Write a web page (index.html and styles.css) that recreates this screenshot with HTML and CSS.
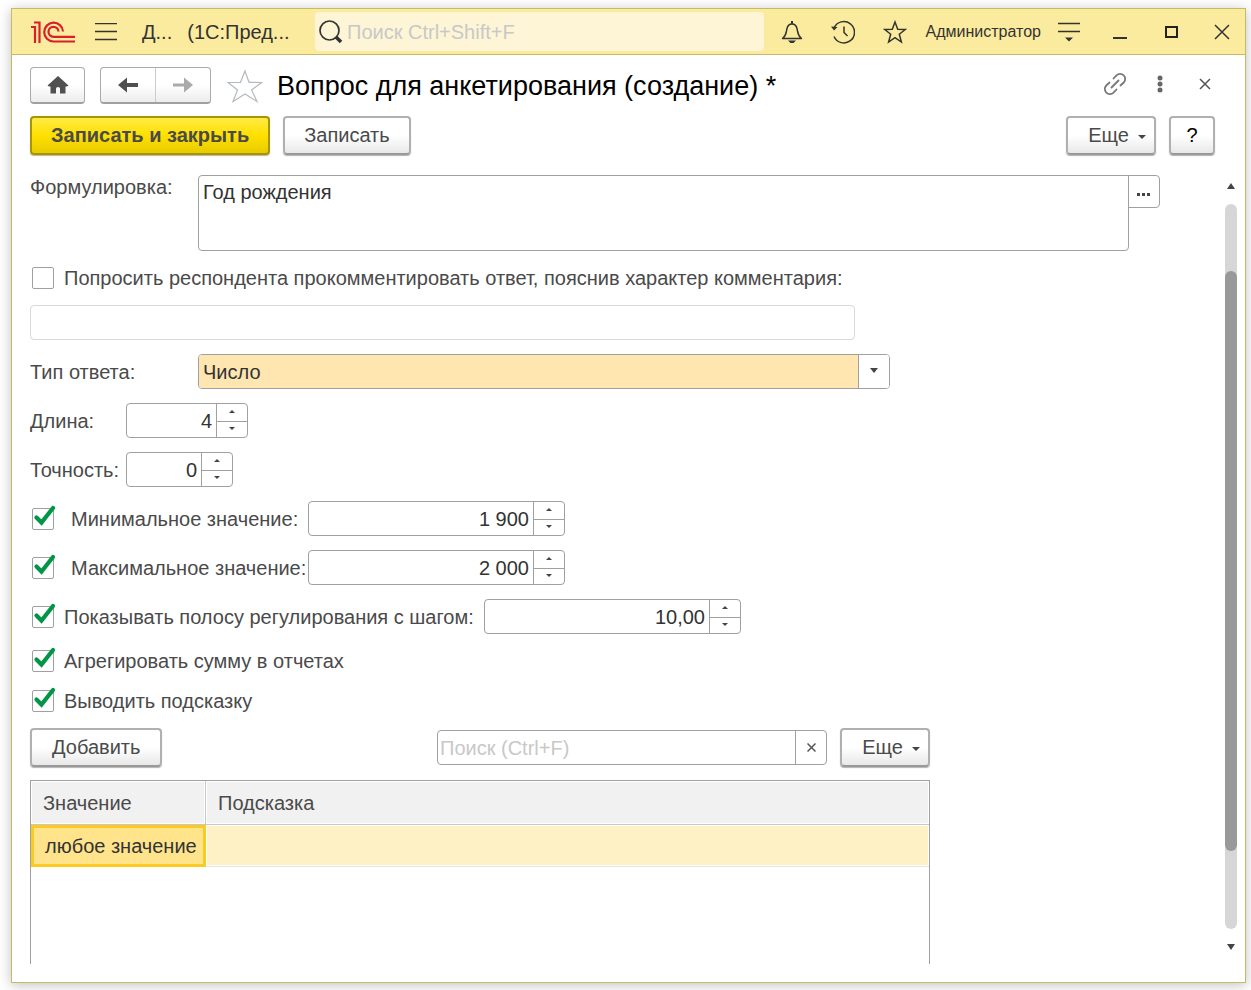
FILE: index.html
```html
<!DOCTYPE html>
<html lang="ru">
<head>
<meta charset="utf-8">
<title>Вопрос для анкетирования (создание)</title>
<link rel="stylesheet" href="styles.css">
</head>
<body>
<svg class="sprite" aria-hidden="true">
  <symbol id="tick" viewBox="0 0 26 26"><path d="M5.500 13.500 10.500 18.500 22 4" fill="none" stroke="#009646" stroke-width="4.200" stroke-linecap="round"/></symbol>
  <symbol id="up" viewBox="0 0 6 4" preserveAspectRatio="none"><path d="M0 4 3 0 6 4z" fill="#444"/></symbol>
  <symbol id="down" viewBox="0 0 6 4" preserveAspectRatio="none"><path d="M0 0H6L3 4z" fill="#444"/></symbol>
</svg>
<div class="window">
  <header class="titlebar">
    <svg class="logo" width="44" height="22" viewBox="0 0 44 22" role="img" aria-label="1С"><g fill="none" stroke="#d9202a" stroke-width="2.200"><path d="M0 6H4V22M3 1.500H8.500V22M32 10.500A9.400 9.400 0 1 0 22.500 20.500H44M27.500 10.500A5 5 0 1 0 22.500 15.800H44"/></g></svg>
    <button class="icon menu" aria-label="Главное меню"><svg width="22" height="18" viewBox="0 0 22 18"><path d="M0 .5H22M0 8.500H22M0 16.500H22" stroke="#333" stroke-width="1.500"/></svg></button>
    <div class="app"><span>Д...</span><span>(1С:Пред...</span></div>
    <label class="search">
      <svg width="24" height="24" viewBox="0 0 24 24"><circle cx="10.500" cy="10.500" r="9.500" fill="none" stroke="#333" stroke-width="1.700"/><path d="m17 17 5 5" stroke="#333" stroke-width="3.500"/></svg>
      <input type="text" placeholder="Поиск Ctrl+Shift+F" aria-label="Поиск">
    </label>
    <nav class="tools">
      <button class="icon" aria-label="Оповещения"><svg width="22" height="24" viewBox="0 0 22 24"><path d="M1.500 18.500H20.500C16.500 15.500 17 12.500 16 8.500 15.300 5.500 13.500 4 11 4S6.700 5.500 6 8.500C5 12.500 5.500 15.500 1.500 18.500z" fill="none" stroke="#333" stroke-width="1.500" stroke-linejoin="round"/><path d="M11 1V4" stroke="#333" stroke-width="2"/><path d="M7 20.500H15L12.500 23H9.500z" fill="#333"/></svg></button>
      <button class="icon" aria-label="История"><svg width="24" height="24" viewBox="0 0 24 24"><path d="M3 8A10.700 10.700 0 1 1 3 16.500M13 6.500V12.500L16.500 16" fill="none" stroke="#333" stroke-width="1.500"/><path d="M0 6.500 6.500 7 3 10.500z" fill="#333"/></svg></button>
      <button class="icon" aria-label="Избранное"><svg width="24" height="24" viewBox="0 0 24 24"><path d="m12 2 2.700 7.200 7.600.3-6 4.700 2.100 7.900-6.400-4.400-6.400 4.400 2.100-7.900-6-4.700 7.600-.3z" fill="none" stroke="#333" stroke-width="1.500"/></svg></button>
      <a class="user" href="#user">Администратор</a>
      <button class="icon" aria-label="Настройки"><svg width="22" height="20" viewBox="0 0 22 20"><path d="M0 1.500H22M0 9.500H22" stroke="#333" stroke-width="1.500"/><path d="M7 15.500H15L11 19.500z" fill="#333"/></svg></button>
    </nav>
    <div class="winctl">
      <button class="icon" aria-label="Свернуть"><svg width="16" height="16" viewBox="0 0 16 16"><path d="M1 14H15" stroke="#333" stroke-width="2"/></svg></button>
      <button class="icon" aria-label="Развернуть"><svg width="16" height="16" viewBox="0 0 16 16"><path d="M3 3H14V13H3z" fill="none" stroke="#222" stroke-width="2"/></svg></button>
      <button class="icon" aria-label="Закрыть"><svg width="16" height="16" viewBox="0 0 16 16"><path d="m1 1 14 14M15 1 1 15" stroke="#333" stroke-width="1.500"/></svg></button>
    </div>
  </header>

  <section class="heading">
    <button class="navbtn home" aria-label="Начальная страница"><svg width="22" height="18" viewBox="0 0 22 18"><path d="M11 0 21.500 9.500 20 10.500H18.500V17.500H13V12.500Q13 11 11 11T9 12.500V17.500H3.500V10.500H2L.5 9.500z" fill="#505050"/></svg></button>
    <div class="navpair">
      <button aria-label="Назад"><svg width="22" height="16" viewBox="0 0 22 16"><path d="M1 8 10 .5V6H21V10H10V15.500z" fill="#505050"/></svg></button>
      <button aria-label="Вперед" disabled><svg width="22" height="16" viewBox="0 0 22 16"><path d="M21 8 12 .5V6.500H1V9.500H12V15.500z" fill="#aaa"/></svg></button>
    </div>
    <button class="icon fav" aria-label="Добавить в избранное"><svg width="36" height="34" viewBox="0 0 36 34"><path d="m18 2 4 11.300 12.500.2-10 7.500 5.500 11.500-12-7.500-12 7.500 4.500-11.500-9.500-7.500 12.500-.2z" fill="#fff" stroke="#b4bac0" stroke-width="1.200"/></svg></button>
    <h1>Вопрос для анкетирования (создание) *</h1>
    <div class="formctl">
      <button class="icon" aria-label="Получить ссылку"><svg width="24" height="24" viewBox="0 0 24 24"><g fill="none" stroke="#777" stroke-width="1.800" stroke-linecap="round"><path d="m8.500 15.500 7-7M10.500 6.500l3-3.200a5 5 0 0 1 7.200 7.200l-3.200 3M6.500 10.500l-3.200 3a5 5 0 0 0 7.200 7.200l3-3.200"/></g></svg></button>
      <button class="icon" aria-label="Действия"><svg width="6" height="18" viewBox="0 0 6 18"><g fill="#666"><circle cx="3" cy="3" r="2.500"/><circle cx="3" cy="9" r="2.500"/><circle cx="3" cy="15" r="2.500"/></g></svg></button>
      <button class="icon" aria-label="Закрыть форму"><svg width="12" height="12" viewBox="0 0 12 12"><path d="m1 1 10 10M11 1 1 11" stroke="#555" stroke-width="1.500"/></svg></button>
    </div>
  </section>

  <section class="commands">
    <button class="btn primary">Записать и закрыть</button>
    <button class="btn">Записать</button>
    <span class="grow"></span>
    <button class="btn more">Еще<svg width="8" height="4"><use href="#down"/></svg></button>
    <button class="btn help">?</button>
  </section>

  <main class="content">
    <form class="form">
      <div class="row top">
        <label class="cap wide" for="wording">Формулировка:</label>
        <div class="wording">
          <textarea id="wording">Год рождения</textarea>
          <button type="button" aria-label="Выбрать"><svg width="14" height="3" viewBox="0 0 14 3"><path d="M0 0H3V3H0zM5 0H8V3H5zM10 0H13V3H10z" fill="#444"/></svg></button>
        </div>
      </div>
      <div class="row comment">
        <label class="check"><span class="box"><input type="checkbox"><svg><use href="#tick"/></svg></span>Попросить респондента прокомментировать ответ, пояснив характер комментария:</label>
      </div>
      <input class="field note" type="text" aria-label="Комментарий" disabled>
      <div class="row">
        <label class="cap wide" for="kind">Тип ответа:</label>
        <div class="field select">
          <select id="kind"><option>Число</option></select>
          <span class="drop"><svg width="8" height="5"><use href="#down"/></svg></span>
        </div>
      </div>
      <div class="row">
        <label class="cap" for="len">Длина:</label>
        <div class="field spin w-len"><input id="len" type="text" value="4"><div class="steps"><button type="button" aria-label="Больше"><svg><use href="#up"/></svg></button><button type="button" aria-label="Меньше"><svg><use href="#down"/></svg></button></div></div>
      </div>
      <div class="row">
        <label class="cap" for="prec">Точность:</label>
        <div class="field spin w-prec"><input id="prec" type="text" value="0"><div class="steps"><button type="button" aria-label="Больше"><svg><use href="#up"/></svg></button><button type="button" aria-label="Меньше"><svg><use href="#down"/></svg></button></div></div>
      </div>
      <div class="row">
        <label class="check limit"><span class="box"><input type="checkbox" checked><svg><use href="#tick"/></svg></span>Минимальное значение:</label>
        <div class="field spin"><input type="text" value="1 900" aria-label="Минимальное значение"><div class="steps"><button type="button" aria-label="Больше"><svg><use href="#up"/></svg></button><button type="button" aria-label="Меньше"><svg><use href="#down"/></svg></button></div></div>
      </div>
      <div class="row">
        <label class="check limit"><span class="box"><input type="checkbox" checked><svg><use href="#tick"/></svg></span>Максимальное значение:</label>
        <div class="field spin"><input type="text" value="2 000" aria-label="Максимальное значение"><div class="steps"><button type="button" aria-label="Больше"><svg><use href="#up"/></svg></button><button type="button" aria-label="Меньше"><svg><use href="#down"/></svg></button></div></div>
      </div>
      <div class="row">
        <label class="check step"><span class="box"><input type="checkbox" checked><svg><use href="#tick"/></svg></span>Показывать полосу регулирования с шагом:</label>
        <div class="field spin"><input type="text" value="10,00" aria-label="Шаг"><div class="steps"><button type="button" aria-label="Больше"><svg><use href="#up"/></svg></button><button type="button" aria-label="Меньше"><svg><use href="#down"/></svg></button></div></div>
      </div>
      <div class="flags">
        <label class="check"><span class="box"><input type="checkbox" checked><svg><use href="#tick"/></svg></span>Агрегировать сумму в отчетах</label>
        <label class="check"><span class="box"><input type="checkbox" checked><svg><use href="#tick"/></svg></span>Выводить подсказку</label>
      </div>
      <div class="listbar">
        <button type="button" class="btn">Добавить</button>
        <span class="grow"></span>
        <div class="field find"><input type="text" placeholder="Поиск (Ctrl+F)" aria-label="Поиск в списке"><button type="button" aria-label="Очистить"><svg width="9" height="9" viewBox="0 0 9 9"><path d="m.5.5 8 8M8.500.5l-8 8" stroke="#555" stroke-width="1.500"/></svg></button></div>
        <button type="button" class="btn more">Еще<svg width="8" height="4"><use href="#down"/></svg></button>
      </div>
      <div class="list">
        <table>
          <thead><tr><th class="c1">Значение</th><th>Подсказка</th></tr></thead>
          <tbody><tr><td class="current">любое значение</td><td></td></tr></tbody>
        </table>
      </div>
    </form>
    <div class="scroll">
      <svg width="8" height="6"><use href="#up"/></svg>
      <div class="track"><div class="thumb"></div></div>
      <svg width="8" height="6"><use href="#down"/></svg>
    </div>
  </main>
</div>
</body>
</html>
```

FILE: styles.css
```css
* { box-sizing: border-box; }
body {
  margin: 0;
  min-height: 100vh;
  padding: 8px 5px 7px 11px;
  display: flex;
  background: #fff;
  font: 20px/24px "Liberation Sans", Arial, sans-serif;
  color: #4a4a4a;
}
button, input, select, textarea { font: inherit; color: inherit; margin: 0; padding: 0; border: 0; background: none; outline: 0; }
button { display: flex; align-items: center; justify-content: center; }
svg { display: block; flex: none; }
.sprite { position: absolute; width: 0; height: 0; }
.grow { flex: 1; }

.window {
  flex: 1;
  min-width: 0;
  display: flex;
  flex-direction: column;
  border: 1px solid #c8b964;
  background: #fff;
  box-shadow: 0 2px 12px rgba(0, 0, 0, .25);
}

/* Title bar */
.titlebar {
  display: flex;
  align-items: center;
  height: 46px;
  padding: 0 15px 0 19px;
  background: #fbeb9e;
  border-bottom: 1px solid #c8b964;
  color: #333;
}
.menu { margin-left: 20px; }
.app { display: flex; gap: 15px; margin-left: 25px; width: 173px; white-space: nowrap; }
.search {
  flex: 1;
  display: flex;
  align-items: center;
  gap: 4px;
  height: 39px;
  padding-left: 4px;
  border-radius: 4px;
  background: #fdf5d5;
}
.search input { flex: 1; min-width: 0; }
::placeholder { color: #c8c8c8; opacity: 1; }
.tools { display: flex; align-items: center; gap: 28px; margin-left: 17px; }
.user { margin: 0 -11px 0 -9px; font-size: 16px; color: inherit; text-decoration: none; }
.winctl { display: flex; gap: 35px; margin-left: 32px; }

/* Form heading */
.heading { display: flex; align-items: center; height: 37px; margin: 12px 34px 0 18px; }
.navbtn, .navpair {
  height: 37px;
  border: 1px solid #aaa;
  border-bottom: 2px solid #a0a0a0;
  border-radius: 4px;
  background: linear-gradient(#fff 50%, #ececec);
}
.navbtn { width: 55px; }
.navpair { display: flex; width: 111px; margin-left: 15px; }
.navpair button { flex: 1; }
.navpair button + button { border-left: 1px solid #ccc; }
.fav { margin-left: 16px; }
h1 { flex: 1; margin: 0 0 0 14px; font-size: 27px; font-weight: 400; line-height: 32px; color: #000; white-space: nowrap; }
.formctl { display: flex; align-items: center; gap: 30px; padding-bottom: 3px; }
.formctl .icon:last-child { margin-left: 6px; }

/* Commands */
.commands { display: flex; gap: 13px; margin: 12px 30px 0 18px; }
.btn {
  height: 39px;
  padding: 0 20px 2px;
  border: 2px solid #b0b0b0;
  border-bottom-color: #999;
  border-radius: 4px;
  background: linear-gradient(#fff 50%, #e8e8e8);
  box-shadow: 0 1px 1px rgba(0, 0, 0, .3);
  white-space: nowrap;
}
.commands .btn { padding: 0 19px 2px; }
.commands .primary { border-color: #a89400; background: linear-gradient(#ffea45, #ffe000 50%, #e8cb00); font-weight: 700; }
.btn.more { width: 90px; gap: 9px; padding: 0 0 2px 12px; }
.more svg { margin-top: 4px; }
.commands .help { width: 46px; padding: 0 0 2px; color: #000; }

/* Content */
.content { flex: 1; display: flex; justify-content: space-between; margin: 20px 8px 0 18px; padding-bottom: 18px; }
.form { flex: 1; max-width: 1130px; min-width: 0; display: flex; flex-direction: column; gap: 14px; }
.row { display: flex; align-items: center; }
.top { align-items: flex-start; }
.cap { width: 96px; }
.cap.wide { width: 168px; }
.wording { flex: 1; display: flex; align-items: flex-start; }
.wording textarea {
  flex: 1;
  height: 76px;
  padding: 4px;
  border: 1px solid #a0a0a0;
  border-radius: 4px 0 4px 4px;
  resize: none;
  color: #333;
}
.wording button { width: 32px; height: 33px; margin-left: -1px; padding-top: 6px; border: 1px solid #a0a0a0; border-radius: 0 4px 4px 0; }
.comment { height: 26px; }
.check { display: flex; align-items: center; gap: 10px; padding-left: 2px; white-space: nowrap; }
.limit { width: 278px; gap: 17px; }
.step { width: 454px; }
.box { position: relative; width: 22px; height: 22px; }
.box input { display: block; width: 22px; height: 22px; appearance: none; border: 1px solid #a0a0a0; border-radius: 2px; background: #fff; }
.box svg { display: none; position: absolute; left: -1px; top: -4px; width: 26px; height: 26px; pointer-events: none; }
.box input:checked + svg { display: block; }

.field { height: 35px; border: 1px solid #a0a0a0; border-radius: 4px; background: #fff; color: #333; }
.note { width: 100%; max-width: 825px; border-color: #d8d8d8; }
.select { position: relative; flex: 1; max-width: 692px; overflow: hidden; }
.select select { width: 100%; height: 33px; padding-left: 4px; appearance: none; background: #ffe6b1; }
.drop { position: absolute; right: 0; top: 0; bottom: 0; width: 31px; display: grid; place-items: center; padding-bottom: 2px; border-left: 1px solid #a0a0a0; background: #fff; pointer-events: none; }
.spin { display: flex; width: 257px; }
.w-len { width: 122px; }
.w-prec { width: 107px; }
.spin input { flex: 1; min-width: 0; padding-right: 4px; text-align: right; }
.steps { width: 31px; display: grid; grid-template-rows: 1fr 1fr; border-left: 1px solid #a0a0a0; }
.steps button { padding: 0 1px 2px 0; }
.steps button + button { border-top: 1px solid #a0a0a0; }
.steps svg { width: 6px; height: 3px; }
.flags { display: flex; flex-direction: column; gap: 16px; padding: 1px 0; }

/* Value list */
.listbar { display: flex; align-items: center; max-width: 900px; }
.find { display: flex; width: 390px; margin-right: 13px; }
.find input { flex: 1; min-width: 0; padding-left: 2px; }
.find button { width: 31px; border-left: 1px solid #a0a0a0; }
.list { flex: 1; max-width: 900px; margin-top: -1px; border: 1px solid #a0a0a0; border-bottom: 0; }
table { width: 100%; table-layout: fixed; border-collapse: separate; border-spacing: 0; }
th { height: 44px; padding: 0 12px; border-bottom: 1px solid #c8c8c8; background: #f1f1f1; box-shadow: inset 0 0 0 1px #fff; font-weight: 400; text-align: left; }
.c1 { width: 175px; border-right: 1px solid #c8c8c8; }
td { height: 42px; padding: 0 11px; border-bottom: 1px solid #e4e4e4; background: #fef1c5; color: #333; box-shadow: inset 0 0 0 1px #fff; white-space: nowrap; }
.current { border: 3px solid #fbcb22; background: #ffe48c; box-shadow: none; }

/* Scroll bar */
.scroll { width: 12px; display: flex; flex-direction: column; align-items: center; gap: 15px; padding: 8px 0 14px; }
.track { flex: 1; width: 12px; border-radius: 6px; background: #d6d6d6; padding: 67px 0 78px; display: flex; }
.thumb { flex: 1; border-radius: 6px; background: #999; }
```
